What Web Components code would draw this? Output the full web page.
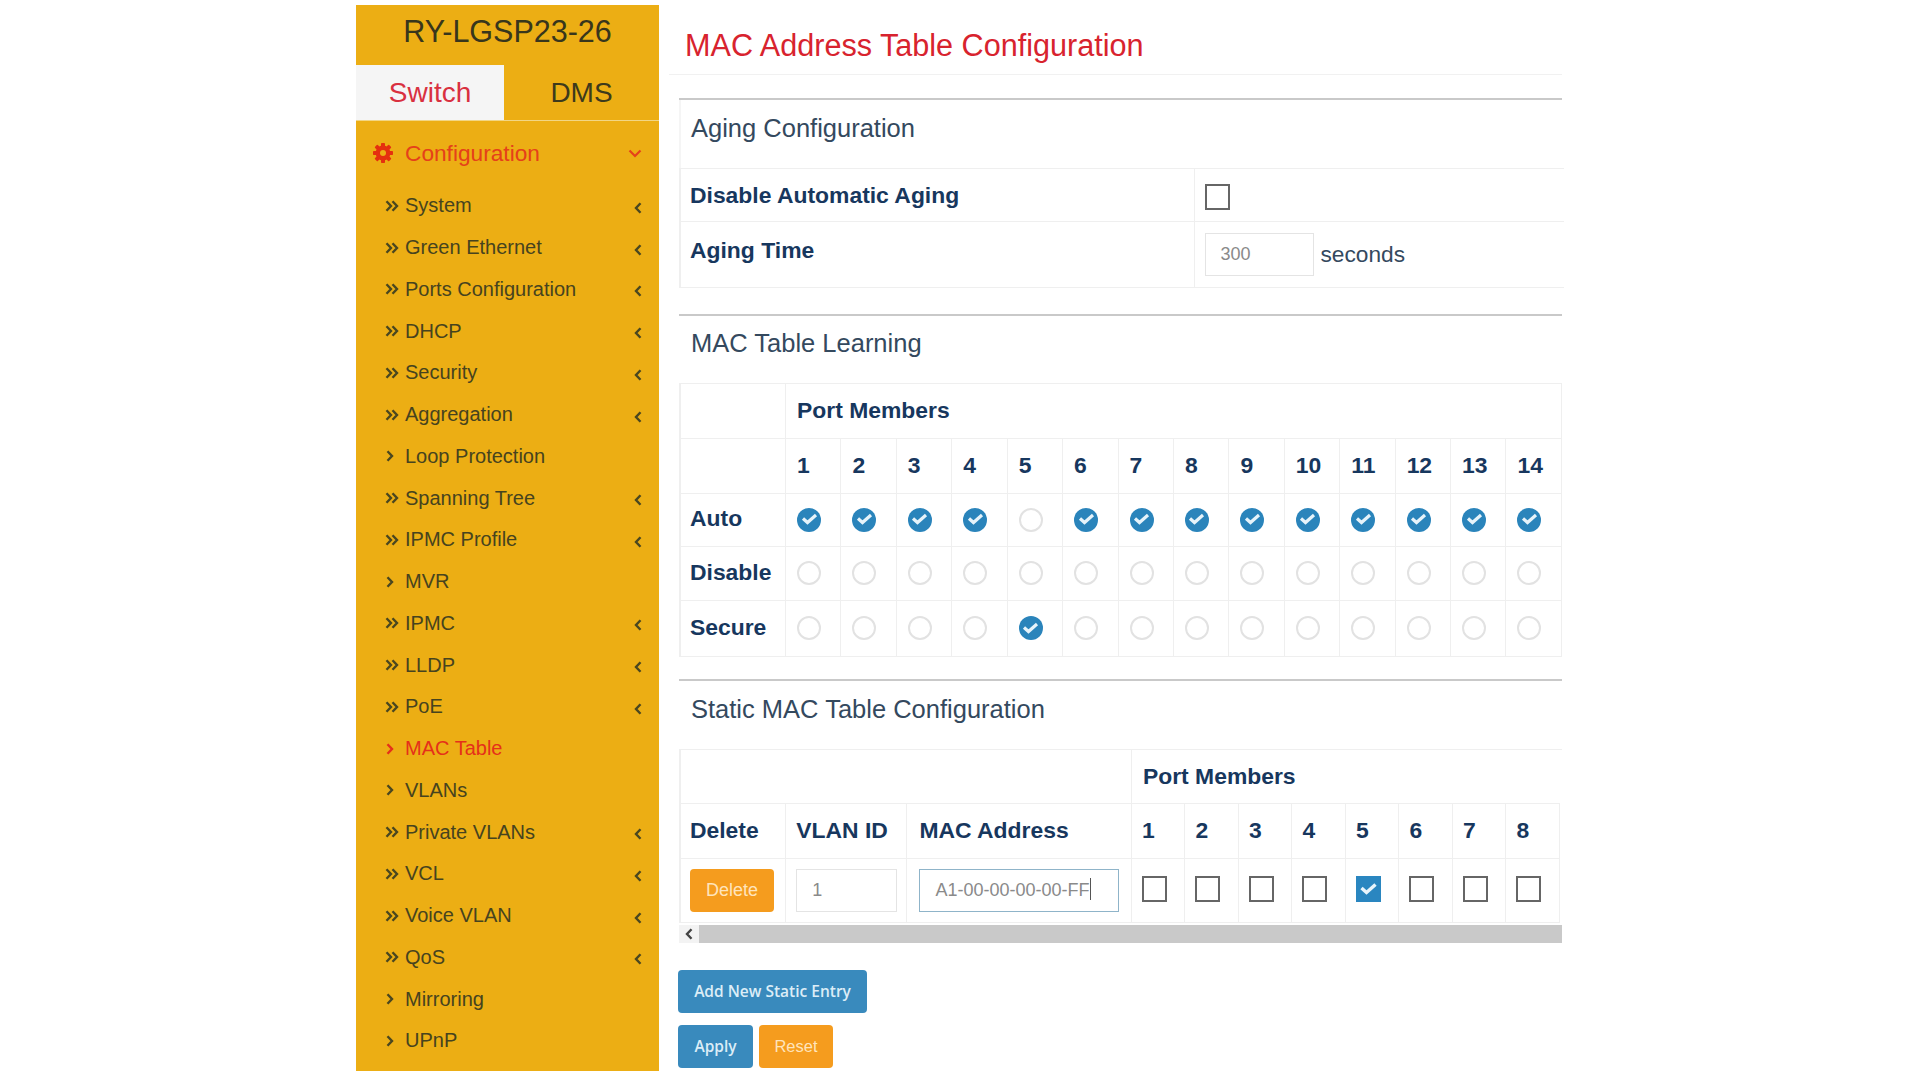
<!doctype html>
<html><head><meta charset="utf-8"><title>MAC Address Table Configuration</title>
<style>
html,body{margin:0;padding:0;background:#fff;overflow:hidden;height:1080px}
body{font-family:"Liberation Sans",Arial,sans-serif}
action-bar div{display:flex;gap:6px}
</style></head>
<body>
<app-shell>
  <side-bar slot="side" brand="RY-LGSP23-26">
    <nav-item kind="sub">System</nav-item>
    <nav-item kind="sub">Green Ethernet</nav-item>
    <nav-item kind="sub">Ports Configuration</nav-item>
    <nav-item kind="sub">DHCP</nav-item>
    <nav-item kind="sub">Security</nav-item>
    <nav-item kind="sub">Aggregation</nav-item>
    <nav-item>Loop Protection</nav-item>
    <nav-item kind="sub">Spanning Tree</nav-item>
    <nav-item kind="sub">IPMC Profile</nav-item>
    <nav-item>MVR</nav-item>
    <nav-item kind="sub">IPMC</nav-item>
    <nav-item kind="sub">LLDP</nav-item>
    <nav-item kind="sub">PoE</nav-item>
    <nav-item active>MAC Table</nav-item>
    <nav-item>VLANs</nav-item>
    <nav-item kind="sub">Private VLANs</nav-item>
    <nav-item kind="sub">VCL</nav-item>
    <nav-item kind="sub">Voice VLAN</nav-item>
    <nav-item kind="sub">QoS</nav-item>
    <nav-item>Mirroring</nav-item>
    <nav-item>UPnP</nav-item>
  </side-bar>
  <page-title>MAC Address Table Configuration</page-title>
  <aging-panel></aging-panel>
  <learning-panel></learning-panel>
  <static-panel></static-panel>
  <action-bar>
    <div><ui-btn tone="blue" w="189" fs="15.500">Add New Static Entry</ui-btn></div>
    <div><ui-btn tone="blue" w="75" fs="15.500">Apply</ui-btn><ui-btn tone="orange" w="74" fs="16.500">Reset</ui-btn></div>
  </action-bar>
</app-shell>
<script>
const chevron = {
  dbl:'<svg width="14" height="12" viewBox="0 0 14 12" fill="none" stroke="currentColor" stroke-width="2.400"><path d="M1.500 1.200 6 6l-4.500 4.800M7.500 1.200 12 6l-4.500 4.800"/></svg>',
  one:'<svg width="14" height="12" viewBox="0 0 14 12" fill="none" stroke="currentColor" stroke-width="2.400"><path d="M2.500 1.200 7 6l-4.500 4.800"/></svg>',
  left:'<svg width="8" height="12" viewBox="0 0 8 12" fill="none" stroke="currentColor" stroke-width="2.400"><path d="M6.500 1.200 2 6l4.500 4.800"/></svg>',
  down:'<svg width="14" height="9" viewBox="0 0 14 9" fill="none" stroke="currentColor" stroke-width="2.200"><path d="M1.500 1.500 7 7l5.500-5.500"/></svg>'
};
const teeth = [0,45,90,135].map(a=>`<rect x="8" y="0" width="4" height="20" rx=".8" transform="rotate(${a} 10 10)"/>`).join('');
const cog = `<svg width="20" height="20" viewBox="0 0 20 20"><g fill="#e5300f">${teeth}<circle cx="10" cy="10" r="7.400"/></g><circle cx="10" cy="10" r="3" fill="#ecae14"/></svg>`;
function def(name, html, init){
  customElements.define(name, class extends HTMLElement{
    constructor(){super();this.attachShadow({mode:'open'});}
    connectedCallback(){this.shadowRoot.innerHTML = typeof html==='function'?html(this):html; init&&init(this);}
  });
}
def('app-shell',`<style>
:host{display:flex;align-items:flex-start;box-sizing:border-box;width:1920px;height:1080px;padding:5px 0 0 356px}
.side{display:block;flex:none;width:303px;margin-right:10px}
main{display:block;width:893px;flex:none}
</style><div class="side"><slot name="side"></slot></div><main><slot></slot></main>`);
def('side-bar',h=>`<style>
:host{display:block;width:303px;height:1066px;background:#ecae14;font-family:"Liberation Sans",Arial,sans-serif;color:#3d3a1c}
.brand{height:60px;box-sizing:border-box;padding-top:11px;font-size:30.500px;line-height:30px;text-align:center;color:#38361c}
.tabs{display:flex;height:55px;border-bottom:1px solid #f2d684;box-sizing:content-box;font-size:28px}
.tabs div{display:flex;align-items:center;justify-content:center}
.on{width:148px;background:#f5f5f5;color:#d93040}
.off{flex:1;color:#3d3a1c}
.cfg{display:flex;align-items:center;height:64px;padding-left:17px;color:#e5401a;font-size:22.700px}
.cfg>svg{margin-right:12px}
.cfg span{flex:1}
.cfg .d{display:flex;margin-right:17px}
</style>
<div class="brand">${h.getAttribute('brand')}</div>
<div class="tabs"><div class="on">Switch</div><div class="off">DMS</div></div>
<div class="cfg">${cog}<span>Configuration</span><i class="d">${chevron.down}</i></div>
<slot></slot>`);
def('nav-item',h=>{const sub=h.getAttribute('kind')==='sub',act=h.hasAttribute('active');return `<style>
:host{display:flex;align-items:center;height:41.750px;padding-left:29px;font-size:20px;color:${act?'#e5301a':'#46431f'}}
.i{display:flex;width:20px;color:${act?'#e5301a':'#4a4720'}}
.t{flex:1}
.c{display:flex;margin:4px 17px 0 0;color:#4a4720}
</style><span class="i">${sub?chevron.dbl:chevron.one}</span><span class="t"><slot></slot></span>${sub?`<span class="c">${chevron.left}</span>`:''}`});
def('page-title',`<style>
:host{display:block;height:70px;box-sizing:border-box;border-bottom:1px solid #f1f1f1;padding:25px 0 0 16px;font-size:30.600px;line-height:30px;color:#d8232e;font-family:"Liberation Sans",Arial,sans-serif}
</style><slot></slot>`);
const panelCss = `
:host{display:block;margin-left:10px;font-family:"Liberation Sans",Arial,sans-serif;color:#17375e}
.rule{height:2px;background:#c9c9c9}
h3{margin:0;height:68px;box-sizing:border-box;padding-left:12px;font-weight:400;font-size:25.500px;line-height:56px;color:#34495e}
.wrap{border-left:2px solid #efefef;margin-left:0}
h3.b{border-left:2px solid #f5f5f5;padding-left:10px}
table{border-collapse:collapse;table-layout:fixed;width:883px}
td,th{border:1.500px solid #efefef;padding:0 0 0 10px;text-align:left;font-size:22.900px;font-weight:700;color:#17375e;vertical-align:middle;box-sizing:border-box;overflow:hidden;white-space:nowrap}
tr>:first-child{border-left:none}
`;
def('check-box',h=>`<style>
:host{display:flex;align-items:center;justify-content:center;width:25px;height:26px;box-sizing:border-box;${h.hasAttribute('checked')?'background:#2a86c0;':'border:2px solid #666;background:#fff;'}}
</style>${h.hasAttribute('checked')?'<svg width="19" height="14" viewBox="0 0 19 14" fill="none" stroke="#e8f4fb" stroke-width="3.400"><path d="m2.500 6 5 4.500L16.500 2.500"/></svg>':''}`);
def('radio-dot',h=>`<style>
:host{display:flex;align-items:center;justify-content:center;width:24px;height:24px;border-radius:50%;box-sizing:border-box;${h.hasAttribute('checked')?'background:#2a84bb;':'border:2px solid #e2e2e2;background:#fff;'}}
</style>${h.hasAttribute('checked')?'<svg width="17" height="13" viewBox="0 0 17 13" fill="none" stroke="#e6f3fa" stroke-width="3.200"><path d="m2 5.500 4.500 4L15 2"/></svg>':''}`);
def('text-box',h=>`<style>
:host{display:block;box-sizing:border-box;height:43px;width:${h.getAttribute('w')}px;padding-left:${h.getAttribute('pad')||15}px;border:${h.hasAttribute('focus')?'1.500px solid #8fb4c9':'1.500px solid #e4e4e4'};font:400 18px/41px "Liberation Sans",Arial,sans-serif;color:#8a8a8a;background:#fff}
.caret{display:inline-block;width:1px;height:22px;background:#555;vertical-align:-4px}
</style><slot></slot>${h.hasAttribute('focus')?'<span class="caret"></span>':''}`);
def('ui-btn',h=>{const t=h.getAttribute('tone'),fs=h.getAttribute('fs')||18;return `<style>
:host{display:inline-flex;align-items:center;justify-content:center;box-sizing:border-box;width:${h.getAttribute('w')}px;height:43px;border-radius:4px;background:${t==='blue'?'#398abd':'#f59c1e'};color:${t==='blue'?'#dcedf7':'#ffe4bc'};font:${t==='blue'?'600':'400'} ${fs}px ${t==='blue'?'"Open Sans"':'"Liberation Sans"'},Arial,sans-serif}
</style><slot></slot>`});
def('aging-panel',`<style>${panelCss}
:host{margin-top:23px}
tr>:last-child{border-right:none}
.top td{height:53px}.bot td{height:66px}
.bot td{vertical-align:top}
.lab{line-height:26px}
.bot .lab{padding-top:15px}
.val{padding-left:10px}
.f{display:flex;align-items:center;padding-top:11px;gap:7px;font-weight:400;color:#34495e;font-size:22.700px}
.top check-box{margin-top:3px}
</style>
<div class="rule"></div><h3 class="b">Aging Configuration</h3>
<div class="wrap"><table><colgroup><col style="width:513px"><col></colgroup>
<tr class="top"><td class="lab" style="padding-left:9px">Disable Automatic Aging</td><td class="val"><check-box></check-box></td></tr>
<tr class="bot"><td class="lab" style="padding-left:9px">Aging Time</td><td class="val"><div class="f"><text-box w="109">300</text-box><span>seconds</span></div></td></tr>
</table></div>`);
def('learning-panel',h=>{
  const rows=[['Auto',p=>p!==5],['Disable',()=>false],['Secure',p=>p===5]];
  const hs=[53,54,56];
  const ports=[...Array(14).keys()].map(i=>i+1);
  return `<style>${panelCss}
  :host{margin-top:26px}
  h3{height:66.500px;line-height:54.500px}
  table{width:881px}
  td{padding-left:11px}
  tr>:first-child{padding-left:9px}
  .lb{padding-bottom:2px}
  .num td{padding-bottom:1px}
  </style>
  <div class="rule"></div><h3>MAC Table Learning</h3>
  <div class="wrap"><table><colgroup><col style="width:104.500px">${ports.map(()=>'<col>').join('')}</colgroup>
  <tr style="height:55px"><td></td><td colspan="14" style="padding-left:11px">Port Members</td></tr>
  <tr class="num" style="height:55px"><td></td>${ports.map(p=>`<td style="padding-left:11px">${p}</td>`).join('')}</tr>
  ${rows.map((r,i)=>`<tr style="height:${hs[i]}px"><td class="lb">${r[0]}</td>${ports.map(p=>`<td><radio-dot${r[1](p)?' checked':''}></radio-dot></td>`).join('')}</tr>`).join('')}
  </table></div>`});
def('static-panel',()=>{
  const ports=[1,2,3,4,5,6,7,8];
  return `<style>${panelCss}
  :host{margin-top:22.500px}
  table{width:879px}
  .wrap{border-top:1.500px solid #efefef}
  .wrap tr:first-child td{border-top:none}
  .wrap tr:first-child td:last-child{border-right:none}
  td{padding-left:10px}
  tr>:first-child{padding-left:9px}
  .bar{display:flex;height:18px;margin-top:2px}
  .arrow{display:flex;align-items:center;justify-content:center;width:20px;background:#f3f3f3;color:#444}
  .thumb{flex:1;background:#c9c9c9}
  .ctl{vertical-align:top;padding-top:10px}
  .box{padding-top:17px}
  </style>
  <div class="rule"></div><h3>Static MAC Table Configuration</h3>
  <div class="wrap"><table><colgroup><col style="width:104.500px"><col style="width:121px"><col style="width:224px">${ports.map(()=>'<col style="width:53.400px">').join('')}</colgroup>
  <tr style="height:53px"><td colspan="3"></td><td colspan="8" style="padding-left:11px">Port Members</td></tr>
  <tr style="height:55px"><td>Delete</td><td>VLAN ID</td><td style="padding-left:12px">MAC Address</td>${ports.map(p=>`<td style="padding-left:10px">${p}</td>`).join('')}</tr>
  <tr style="height:64px"><td class="ctl"><ui-btn tone="orange" w="84">Delete</ui-btn></td><td class="ctl"><text-box w="101">1</text-box></td><td class="ctl" style="padding-left:12px"><text-box w="200" focus>A1-00-00-00-00-FF</text-box></td>${ports.map(p=>`<td class="ctl box" style="padding-left:10px"><check-box${p===5?' checked':''}></check-box></td>`).join('')}</tr>
  </table></div>
  <div class="bar"><div class="arrow">${chevron.left}</div><div class="thumb"></div></div>`});
def('action-bar',`<style>
:host{display:flex;flex-direction:column;gap:12px;margin:27px 0 0 9px}
</style><slot></slot>`);
</script>
</body></html>
